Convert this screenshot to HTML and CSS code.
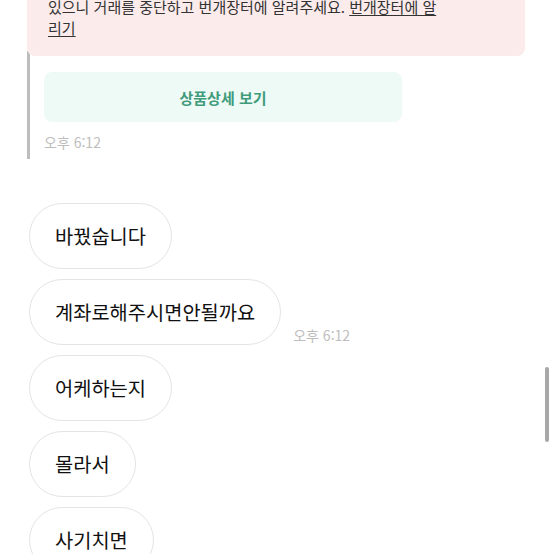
FILE: index.html
```html
<!DOCTYPE html>
<html lang="ko">
<head>
<meta charset="utf-8">
<link rel="stylesheet" href="styles.css">
</head>
<body>
<div class="page">
  <div class="notice">
    <p class="notice-text">있으니 거래를 중단하고 번개장터에 알려주세요. <a class="notice-link">번개장터에 알리기</a></p>
  </div>
  <div class="thread">
    <div class="detail-btn">상품상세 보기</div>
    <div class="time">오후 6:12</div>
  </div>
  <div class="messages">
    <div class="row"><div class="bubble">바꿨숩니다</div></div>
    <div class="row"><div class="bubble">계좌로해주시면안될까요</div><span class="time side">오후 6:12</span></div>
    <div class="row"><div class="bubble">어케하는지</div></div>
    <div class="row"><div class="bubble">몰라서</div></div>
    <div class="row"><div class="bubble">사기치면</div></div>
  </div>
  <div class="scrollbar"></div>
</div>
</body>
</html>
```

FILE: styles.css
```css
html, body {
  margin: 0;
  padding: 0;
  background: #ffffff;
  overflow: hidden;
}
body {
  font-family: "Noto Sans CJK KR", "Noto Sans", sans-serif;
  color: #111;
}
.page {
  width: 554px;
  height: 554px;
  overflow: hidden;
  position: relative;
}
.notice {
  position: relative;
  z-index: 1;
  margin: -20px 29px 0 27px;
  padding: 16px 20px 18px 21px;
  background: #fcebeb;
  border-radius: 8px;
}
.notice-text {
  margin: 0;
  width: 393px;
  font-size: 15px;
  line-height: 21px;
  color: #333;
  word-break: break-all;
  line-break: anywhere;
}
.notice-link {
  color: #333;
  text-decoration: underline;
  text-underline-offset: 2px;
}
.thread {
  margin: -5px 0 0 27px;
  border-left: 3px solid #bdbdbd;
  padding: 21px 0 9px 14px;
}
.detail-btn {
  width: 358px;
  height: 50px;
  border-radius: 8px;
  background: #eefaf6;
  color: #3f9b7b;
  font-weight: 700;
  font-size: 15px;
  display: flex;
  align-items: center;
  justify-content: center;
}
.time {
  font-size: 14px;
  line-height: 16px;
  color: #bdbdbd;
  margin-top: 12px;
}
.messages {
  margin: 44px 0 0 29px;
  display: flex;
  flex-direction: column;
  gap: 10px;
}
.row {
  display: flex;
  align-items: flex-end;
  gap: 12px;
}
.bubble {
  border: 1px solid #e4e4e4;
  border-radius: 33px;
  padding: 0 25px;
  height: 64px;
  line-height: 64px;
  font-size: 19.8px;
  color: #111;
  white-space: nowrap;
  background: #fff;
}
.time.side {
  margin: 0;
  line-height: 16px;
  padding-bottom: 2px;
}
.scrollbar {
  position: absolute;
  left: 545px;
  top: 367px;
  width: 4px;
  height: 75px;
  background: #a8a8a8;
  border-radius: 2px;
}
```
